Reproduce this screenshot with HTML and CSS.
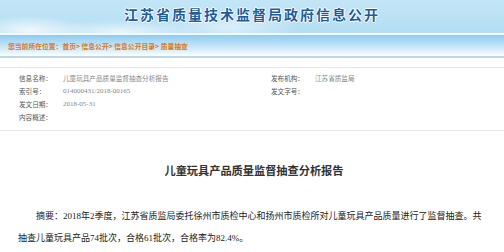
FILE: index.html
```html
<!DOCTYPE html>
<html lang="zh-CN">
<head>
    <meta charset="UTF-8">
    <meta name="viewport" content="width=device-width, initial-scale=1.0">
    <title>江苏省质量技术监督局政府信息公开</title>
    <link rel="stylesheet" href="styles.css">
</head>
<body>
    <div class="site-header">
        <h1>江苏省质量技术监督局政府信息公开</h1>
    </div>

    <div class="crumb-bar">
        <span>您当前所在位置：</span><a href="#">首页</a>&gt; <a href="#">信息公开</a>&gt; <a href="#">信息公开目录</a>&gt; <a href="#">质量抽查</a>
    </div>

    <div class="info-table">
        <div class="info-col">
            <div class="info-row"><span class="info-label">信息名称：</span><span class="info-value">儿童玩具产品质量监督抽查分析报告</span></div>
            <div class="info-row"><span class="info-label">索引号：</span><span class="info-value num">014000431/2018-00165</span></div>
            <div class="info-row"><span class="info-label">发文日期：</span><span class="info-value num">2018-05-31</span></div>
            <div class="info-row"><span class="info-label">内容概述：</span><span class="info-value"></span></div>
        </div>
        <div class="info-col">
            <div class="info-row"><span class="info-label">发布机构：</span><span class="info-value">江苏省质监局</span></div>
            <div class="info-row"><span class="info-label">发文字号：</span><span class="info-value"></span></div>
        </div>
    </div>

    <div class="article">
        <h2 class="article-title">儿童玩具产品质量监督抽查分析报告</h2>
        <p class="article-text">摘要：2018年2季度，江苏省质监局委托徐州市质检中心和扬州市质检所对儿童玩具产品质量进行了监督抽查。共抽查儿童玩具产品74批次，合格61批次，合格率为82.4%。</p>
    </div>
</body>
</html>
```

FILE: styles.css
```css
body {
    margin: 0;
    font-family: 'Liberation Serif', 'Noto Sans CJK SC', serif;
    background: #fff;
    color: #333;
}

.site-header {
    height: 33px;
    display: flex;
    align-items: center;
    justify-content: center;
    background:
        radial-gradient(ellipse 60px 14px at 30px 30px, rgba(255, 255, 255, 0.8), rgba(255, 255, 255, 0) 100%),
        radial-gradient(ellipse 80px 12px at 120px 32px, rgba(255, 255, 255, 0.7), rgba(255, 255, 255, 0) 100%),
        radial-gradient(ellipse 70px 16px at 230px 28px, rgba(255, 255, 255, 0.5), rgba(255, 255, 255, 0) 100%),
        linear-gradient(180deg, #c3e6f6, #b3def3);
    border-bottom: 2px solid #f2f9fd;
}

.site-header h1 {
    margin: 0 0 6px;
    font-family: 'Noto Sans CJK SC', sans-serif;
    font-size: 14px;
    font-weight: bold;
    letter-spacing: 2px;
    color: #1d5c9e;
    text-shadow: 1px 0 0 #fff, -1px 0 0 #fff, 0 1px 0 #fff, 0 -1px 0 #fff;
}

.crumb-bar {
    height: 21px;
    line-height: 22px;
    padding-left: 8px;
    background: linear-gradient(180deg, #8dccf2, #d6ecf9 70%, #ffffff);
    border-bottom: 2px solid #bcd8e6;
    font-family: 'Noto Sans CJK SC', sans-serif;
    font-size: 6.8px;
    font-weight: bold;
    color: #d9781c;
}

.crumb-bar a {
    color: #d9781c;
    text-decoration: none;
}

.info-table {
    display: flex;
    margin-top: 9px;
    padding: 4px 0 6px;
    border-top: 1px solid #e6e6e6;
    border-bottom: 1px solid #e6e6e6;
    font-family: 'Noto Sans CJK SC', sans-serif;
    font-size: 6.6px;
}

.info-col {
    width: 252px;
    padding-left: 19px;
}

.info-row {
    display: flex;
    height: 13px;
    line-height: 13px;
}

.info-label {
    width: 44px;
    color: #555;
}

.info-value {
    color: #888;
}

.info-value.num {
    font-family: 'Liberation Serif', serif;
    font-size: 7px;
}

.article {
    padding: 0 14px 0 18px;
}

.article-title {
    margin: 29px 0 25px;
    line-height: 20px;
    text-align: center;
    font-family: 'Noto Sans CJK SC', serif;
    font-size: 11.2px;
    font-weight: bold;
    color: #333;
}

.article-text {
    margin: 0;
    text-indent: 2em;
    font-family: 'Liberation Serif', 'Noto Sans CJK SC', serif;
    font-size: 9px;
    line-height: 22px;
    color: #222;
}
```
